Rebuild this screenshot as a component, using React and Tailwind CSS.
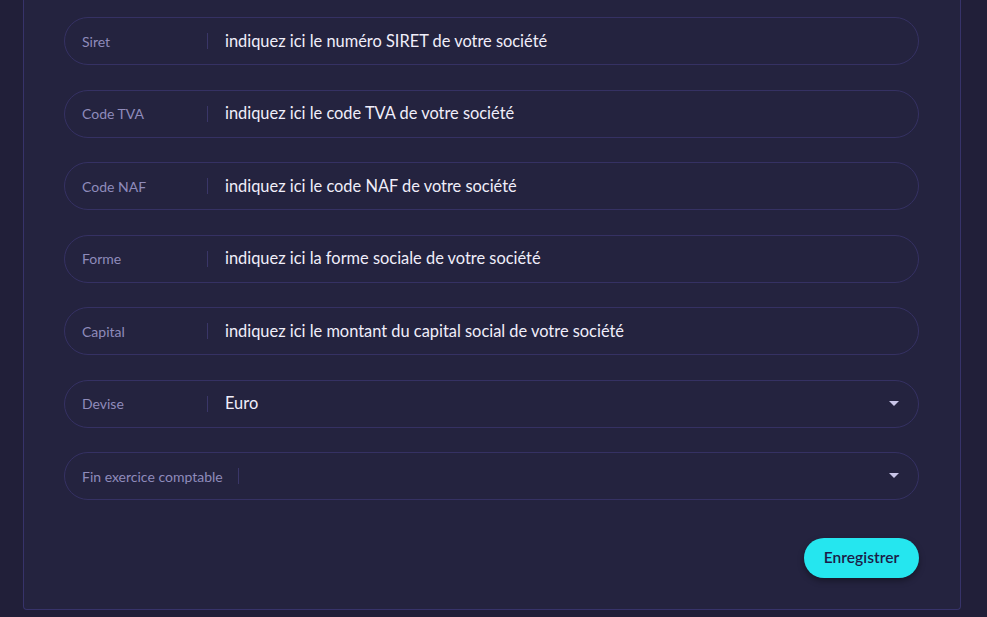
const FIELDS = [
  { label: 'Siret', placeholder: 'indiquez ici le numéro SIRET de votre société' },
  { label: 'Code TVA', placeholder: 'indiquez ici le code TVA de votre société' },
  { label: 'Code NAF', placeholder: 'indiquez ici le code NAF de votre société' },
  { label: 'Forme', placeholder: 'indiquez ici la forme sociale de votre société' },
  { label: 'Capital', placeholder: 'indiquez ici le montant du capital social de votre société' },
];

function Caret() {
  return (
    <svg width="10" height="6" viewBox="0 0 10 6" className="shrink-0">
      <path d="M0 0 L10 0 L5 5 Z" fill="#c9c5e8" />
    </svg>
  );
}

function Field({ label, children, select }) {
  return (
    <div className="flex items-center h-[48px] rounded-full border border-[#353163] pl-[17px] pr-[19px]">
      <span className="min-w-[125px] pr-[15px] text-[14px] text-[#8f8bbb] whitespace-nowrap">{label}</span>
      <span className="w-px h-[16px] bg-[#3a3668]" />
      <div className="flex-1 pl-[17px] text-[16.4px] text-[#f0eefa] whitespace-nowrap">{children}</div>
      {select && <Caret />}
    </div>
  );
}

export default function App() {
  return (
    <div className="w-[987px] h-[617px] overflow-hidden bg-[#211f39] px-[23px]" style={{ fontFamily: 'Lato, "Noto Sans", sans-serif' }}>
      <div className="w-[938px] h-[610px] bg-[#24233f] border-x border-b border-[#37336a] rounded-b-[4px] pt-[17px] pl-[40px] pr-[41px]">
        <div className="flex flex-col gap-[24.5px]">
          {FIELDS.map((f) => (
            <Field key={f.label} label={f.label}>{f.placeholder}</Field>
          ))}
          <Field label="Devise" select>Euro</Field>
          <Field label="Fin exercice comptable" select />
        </div>
        <div className="flex justify-end mt-[38px]">
          <button className="h-[40px] w-[115px] rounded-full bg-[#25e6ef] text-[#1c1c48] text-[15.6px] font-semibold shadow-[0_3px_6px_rgba(0,0,0,0.35)]">
            Enregistrer
          </button>
        </div>
      </div>
    </div>
  );
}
